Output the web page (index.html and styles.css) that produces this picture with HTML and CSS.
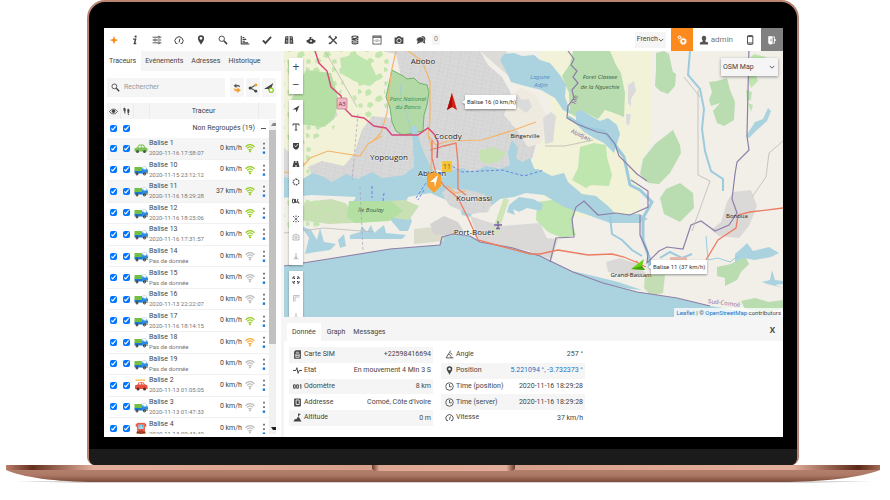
FILE: index.html
```html
<!DOCTYPE html>
<html lang="fr">
<head>
<meta charset="utf-8">
<title>Suivi GPS</title>
<link rel="stylesheet" href="styles.css">
</head>
<body>
<svg class="defs" aria-hidden="true">
  <symbol id="i-plus" viewBox="0 0 16 16"><path d="M8 1l1.800 5.200L15 8 9.800 9.800 8 15 6.200 9.800 1 8l5.200-1.800z" fill="currentColor"/></symbol>
  <symbol id="i-info" viewBox="0 0 16 16"><circle cx="9" cy="2.500" r="1.800" fill="currentColor"/><path d="M5 6.500h4L7 13.500h3" fill="none" stroke="currentColor" stroke-width="2.200"/></symbol>
  <symbol id="i-sliders" viewBox="0 0 16 16"><g fill="none" stroke="currentColor" stroke-width="1.400"><path d="M1 3.500h8m4 0h2M1 8h2m4 0h8M1 12.500h8m4 0h2"/><circle cx="11" cy="3.500" r="1.600"/><circle cx="5" cy="8" r="1.600"/><circle cx="11" cy="12.500" r="1.600"/></g></symbol>
  <symbol id="i-gauge" viewBox="0 0 16 16"><path d="M3 13.500A6.500 6.500 0 1 1 13 13.500H10.500M3 13.500H5.500M8 12l1.500-6" fill="none" stroke="currentColor" stroke-width="1.600"/></symbol>
  <symbol id="i-pin" viewBox="0 0 16 16"><path fill="currentColor" fill-rule="evenodd" d="M8 .5a5 5 0 0 1 5 5c0 3-3 6-5 10-2-4-5-7-5-10a5 5 0 0 1 5-5zm0 2.500a2.300 2.300 0 1 0 0 4.600A2.300 2.300 0 0 0 8 3z"/></symbol>
  <symbol id="i-search" viewBox="0 0 16 16"><circle cx="6" cy="6" r="4.300" fill="none" stroke="currentColor" stroke-width="1.500"/><path d="M9.500 9.500l5 5" stroke="currentColor" stroke-width="2.600"/></symbol>
  <symbol id="i-chart" viewBox="0 0 16 16"><path d="M2 1v13.500h13M4 4h3M4 7h6M4 10h4M4 12.500h9" fill="none" stroke="currentColor" stroke-width="1.700"/></symbol>
  <symbol id="i-check" viewBox="0 0 16 16"><path d="M1.500 8.500l4 4.500L14.500 3" fill="none" stroke="currentColor" stroke-width="3"/></symbol>
  <symbol id="i-road" viewBox="0 0 16 16"><path d="M2 2.500l5-1v12.500H1zM9 1.500l5 1 1 11.500H9z" fill="currentColor"/><path d="M4.500 3v3m0 2v4M11.500 3v3m0 2v4" stroke="#fff"/></symbol>
  <symbol id="i-engine" viewBox="0 0 16 16"><path d="M1 8h2l2-2h1V4H5V3h5v1H8v2h3l2 2h2v4h-2l-2 2H5l-2-2H1z" fill="currentColor"/><circle cx="8" cy="9.500" r="1.500" fill="#fff"/></symbol>
  <symbol id="i-tools" viewBox="0 0 16 16"><path d="M2 2l12 12M14 3L3 14" stroke="currentColor" stroke-width="2.200"/><path d="M1 4l3-3M11.500 2.500L14 5M1.500 12.500l2 2" stroke="currentColor" stroke-width="2"/></symbol>
  <symbol id="i-db" viewBox="0 0 16 16"><g fill="none" stroke="currentColor" stroke-width="1.800"><ellipse cx="8" cy="3.500" rx="5" ry="2"/><path d="M3 6c0 3 10 3 10 0M3 9c0 3 10 3 10 0M3 12c0 3 10 3 10 0M4 8l8-4"/></g></symbol>
  <symbol id="i-code" viewBox="0 0 16 16"><rect x="1.500" y="1.500" width="13" height="13" fill="none" stroke="currentColor" stroke-width="1.300"/><path d="M1.500 3.500h13" stroke="currentColor" stroke-width="2"/><path d="M6 7.500L4.500 9 6 10.500M10 7.500L11.500 9 10 10.500M8.500 7l-1 4" fill="none" stroke="currentColor"/></symbol>
  <symbol id="i-camera" viewBox="0 0 16 16"><path d="M1 4h3.500L6 2h4l1.500 2H15v10H1z" fill="currentColor"/><circle cx="8" cy="9" r="3.400" fill="none" stroke="#fff" stroke-width="1.400"/></symbol>
  <symbol id="i-chat" viewBox="0 0 16 16"><path d="M9 1.500c4 0 6 2 6 5 0 2-.5 2.500-1 3.500l1 4-4-2z" fill="currentColor"/><ellipse cx="7" cy="7.500" rx="6" ry="4.500" fill="currentColor" stroke="#fff" stroke-width=".8"/><path d="M3 10l-1.500 4.500L7 12z" fill="currentColor"/></symbol>
  <symbol id="i-gears" viewBox="0 0 16 16"><g fill="none" stroke="currentColor"><circle cx="10" cy="10" r="3.400" stroke-width="2.400"/><circle cx="10" cy="10" r="5" stroke-width="1.500" stroke-dasharray="2 1.900"/><circle cx="4" cy="3.800" r="1.800" stroke-width="1.600"/><circle cx="4" cy="3.800" r="3" stroke-dasharray="1.300 1.200"/></g></symbol>
  <symbol id="i-user" viewBox="0 0 16 16"><path d="M8 1c2.500 0 3.500 1.800 3.500 4 0 1.800-.8 3-1.500 4v1.500l4.500 1.500V15h-13v-3L6 10.500V9C5.300 8 4.500 6.800 4.500 5 4.500 2.800 5.500 1 8 1z" fill="currentColor"/></symbol>
  <symbol id="i-phone" viewBox="0 0 16 16"><rect x="4" y="1" width="8.500" height="14" rx="1" fill="none" stroke="currentColor" stroke-width="1.500"/><path d="M4 12.800h8.500M4 2.500h8.500" stroke="currentColor" stroke-width="1.500"/></symbol>
  <symbol id="i-exit" viewBox="0 0 16 16"><path d="M2 2h7v12l-3.500 1.500L2 13z" fill="currentColor"/><path d="M9.500 3H12v2.500M12 10.500V13H9.500" fill="none" stroke="currentColor" stroke-width="1.400"/><path d="M11 5l4 3-4 3z" fill="currentColor"/><path d="M6.500 6v4" stroke="#808080" stroke-width="1.400"/></symbol>
  <symbol id="i-down" viewBox="0 0 16 16"><path d="M2 5l6 6 6-6" fill="none" stroke="currentColor" stroke-width="2.300"/></symbol>
  <symbol id="i-refresh" viewBox="0 0 16 16"><path d="M7 1L2.500 4.500 7 8V5.700h3c1.500 0 2 .8 2 1.800C13.500 5 12 3.300 10 3.300H7z" fill="#555"/><path d="M9 8l4.500 3.500L9 15v-2.300H6.500C4.500 12.700 3 11 4 8.500c0 1.200 1 1.800 2.500 1.800H9z" fill="#f79a2b" stroke="#f79a2b" stroke-width=".8"/></symbol>
  <symbol id="i-share" viewBox="0 0 16 16"><path d="M12.500 3L4 8l8.500 5" fill="none" stroke="#555" stroke-width="1.800"/><circle cx="12.500" cy="3" r="2.300" fill="#f79a2b"/><circle cx="3.500" cy="8" r="2.500" fill="#444"/><circle cx="12.500" cy="13" r="2.300" fill="#444"/></symbol>
  <symbol id="i-addobj" viewBox="0 0 16 16"><path d="M15 0L0 9.500h7L9 15z" fill="#4a4a4a"/><circle cx="11.500" cy="11.500" r="3.300" fill="#fff" stroke="#8fd01f" stroke-width="2"/></symbol>
  <symbol id="i-eye" viewBox="0 0 16 16"><path d="M1 8c3.500-5.500 10.500-5.500 14 0-3.500 5.500-10.500 5.500-14 0z" fill="none" stroke="currentColor" stroke-width="1.500"/><circle cx="8" cy="7.500" r="3" fill="currentColor"/></symbol>
  <symbol id="i-feet" viewBox="0 0 16 16"><path d="M3 1.500c3-1 4.500 2 3 7H3.500c0-2-2-5-.5-7zM3.800 9.500h2.500c0 3-2.300 3-2.500 0zM10 3.500c3-1 4 2 2.500 7H10c0-2-1.500-5 0-7zM10 11.500h2.500c0 3.500-2.300 3.500-2.500 0z" fill="currentColor"/></symbol>
  <symbol id="i-wifi" viewBox="0 0 16 16"><g fill="none" stroke="currentColor"><path d="M1 6c4-4.500 10-4.500 14 0" stroke-width="2"/><path d="M3.300 8.700c3-3.300 6.400-3.300 9.400 0" stroke-width="2"/><path d="M5.500 11.300c1.600-1.700 3.400-1.700 5 0" stroke-width="1.800"/></g><circle cx="8" cy="13.300" r="1.700" fill="currentColor"/></symbol>
  <symbol id="i-dots" viewBox="0 0 4 16"><path d="M1 2h2v2H1zM1 7h2v2H1z" fill="#666"/><path d="M.6 12h2.700v2.700H.6z" fill="#1478d4"/></symbol>
  <symbol id="v-truck" viewBox="0 0 28 24"><path d="M17 4h7l3 7v4H17z" fill="#d5e6f0"/><path d="M1 13h26v6H1z" fill="#1d78cf"/><path d="M16 9h10l2 4v6H16z" fill="#2c8be0"/><path d="M19 6h4l2 5h-6z" fill="#f2fafd"/><path d="M1 6h15v8H1z" fill="#72c043"/><circle cx="6" cy="20" r="2.800" fill="#333"/><circle cx="21" cy="20" r="2.800" fill="#333"/><circle cx="6" cy="20" r="1.200" fill="#ccc"/><circle cx="21" cy="20" r="1.200" fill="#ccc"/><path d="M25 16h3v3h-3z" fill="#f6a623"/></symbol>
  <symbol id="v-car" viewBox="0 0 28 24"><path d="M1 19v-6l5-2 4-6h9l4 6 4 2v6z" fill="#7bc253"/><path d="M8 11l3-4h3v4zM15.500 7H18l3 4h-5.500z" fill="#e8f6e0"/><circle cx="7" cy="19" r="3" fill="#4a5a45"/><circle cx="21" cy="19" r="3" fill="#4a5a45"/></symbol>
  <symbol id="v-red" viewBox="0 0 28 24"><path d="M3 1h19v2.500H3z" fill="#f6b93b"/><path d="M2 20v-7l5-2 3-5h8l4 5 5 2v7z" fill="#e8513f"/><path d="M9 11l2-4h3v4zM15.500 7H17l3 4h-4.500z" fill="#ffe5dd"/><circle cx="8" cy="20" r="3" fill="#5a2a26"/><circle cx="21" cy="20" r="3" fill="#5a2a26"/></symbol>
  <symbol id="v-bus" viewBox="0 0 28 32"><path d="M5 2h18v22H5z" fill="#ea5b47"/><path d="M8 6h12v10H8z" fill="#9adcf0"/><path d="M11 7l2 0-2 6zM17 7l2 0-2 6z" fill="#2e80a5"/><path d="M2 4h3v7H2zM23 4h3v7h-3z" fill="#ea5b47"/><path d="M4 22h20v5H4z" fill="#7b2d26"/><path d="M4 26h6v5H4zM18 26h6v5h-6z" fill="#f8c12c"/><path d="M10 19h8v7h-8z" fill="#b93a2c"/></symbol>
  <symbol id="i-arrow" viewBox="0 0 16 16"><path d="M15 1L1 9h6.500L9 15z" fill="currentColor"/></symbol>
  <symbol id="i-text" viewBox="0 0 16 16"><path d="M2 5V2h12v3M8 2v12M5.500 14h5" fill="none" stroke="currentColor" stroke-width="2"/></symbol>
  <symbol id="i-shield" viewBox="0 0 16 16"><path d="M2 2h12v7c0 3-3 5-6 6.500C5 14 2 12 2 9z" fill="currentColor"/><path d="M5 7l2.500 2.500L12 4" fill="none" stroke="#fff" stroke-width="1.600"/></symbol>
  <symbol id="i-highway" viewBox="0 0 16 16"><path d="M4 2h3v4h2V2h3l3 12H9v-4H7v4H1z" fill="currentColor"/></symbol>
  <symbol id="i-poly" viewBox="0 0 16 16"><path d="M8 2l5.500 3v6L8 14l-5.500-3V5z" fill="none" stroke="currentColor" stroke-width="2.200" stroke-dasharray="3.500 1.600"/></symbol>
  <symbol id="i-ruler" viewBox="0 0 16 16"><path d="M1 4.500v7h4v-7zM7 4v8M9 12l3-8M12 12h3M12 8v4" fill="none" stroke="currentColor" stroke-width="1.900"/></symbol>
  <symbol id="i-cluster" viewBox="0 0 16 16"><circle cx="8" cy="8" r="2" fill="currentColor"/><path d="M2 2l3 3M14 2l-3 3M2 14l3-3M14 14l-3-3M8 1v3M8 12v3" stroke="currentColor" stroke-width="1.800"/></symbol>
  <symbol id="i-street" viewBox="0 0 16 16"><path d="M2 5l6-3 6 3v9H2z" fill="none" stroke="currentColor" stroke-width="1.400"/><circle cx="8" cy="8.500" r="2.500" fill="none" stroke="currentColor" stroke-width="1.400"/></symbol>
  <symbol id="i-anchor" viewBox="0 0 16 16"><path d="M8 2v11M3 13.500h10M5.500 9.500L8 12l2.500-2.500" fill="none" stroke="currentColor" stroke-width="1.400"/></symbol>
  <symbol id="i-full" viewBox="0 0 16 16"><path d="M2 6V2h4M10 2h4v4M14 10v4h-4M6 14H2v-4M3 3l3 3M13 3l-3 3M3 13l3-3M13 13l-3-3" fill="none" stroke="currentColor" stroke-width="2"/></symbol>
  <symbol id="i-corner" viewBox="0 0 16 16"><path d="M3 15V3h12M6 15V6h9" fill="none" stroke="currentColor" stroke-width="1.200"/></symbol>
  <symbol id="i-sim" viewBox="0 0 16 16"><path d="M2 3l2.500-2.500H14v15H2z" fill="currentColor"/><path d="M5 4h6M5 7h6v6H5zM5 10h6" fill="none" stroke="#fff" stroke-width="1.300"/></symbol>
  <symbol id="i-pulse" viewBox="0 0 16 16"><path d="M0 8h5l2-5 2 10 2-5h5" fill="none" stroke="currentColor" stroke-width="1.700"/></symbol>
  <symbol id="i-odo" viewBox="0 0 16 16"><path d="M1 5h3v6H1zM6.500 5h3v6h-3zM12 6l2-1.500V12" fill="none" stroke="currentColor" stroke-width="1.700"/></symbol>
  <symbol id="i-book" viewBox="0 0 16 16"><rect x="2" y="1" width="12" height="14" rx="1.500" fill="currentColor"/><path d="M5.500 3.500h5.500v8H5.500z" fill="none" stroke="#fff" stroke-width="1.500"/></symbol>
  <symbol id="i-alt" viewBox="0 0 16 16"><path d="M1 15l2-4 4-1 1-3 3 1 4 7zM9 1h2v5H9z" fill="currentColor"/><path d="M11 1l3 1.500L11 4z" fill="currentColor"/></symbol>
  <symbol id="i-angle" viewBox="0 0 16 16"><path d="M10 1L2 14h13M6 8c3 0 5 2 5 6M9 5l4 3" fill="none" stroke="currentColor" stroke-width="1.500"/></symbol>
  <symbol id="i-clock" viewBox="0 0 16 16"><circle cx="8" cy="8" r="6.700" fill="none" stroke="currentColor" stroke-width="1.500"/><path d="M8 3.500V8.500H12" fill="none" stroke="currentColor" stroke-width="1.500"/></symbol>
</svg>

<div class="device">
  <div class="lid">
    <main class="screen">
      <header class="topbar">
        <nav class="tools" aria-label="Outils">
          <button class="tool tool-first" aria-label="Ajouter"><svg><use href="#i-plus"/></svg></button>
          <button class="tool" aria-label="Info"><svg><use href="#i-info"/></svg></button>
          <button class="tool" aria-label="Réglages"><svg><use href="#i-sliders"/></svg></button>
          <button class="tool" aria-label="Tableau de bord"><svg><use href="#i-gauge"/></svg></button>
          <button class="tool" aria-label="Point"><svg><use href="#i-pin"/></svg></button>
          <button class="tool" aria-label="Recherche"><svg><use href="#i-search"/></svg></button>
          <button class="tool" aria-label="Rapports"><svg><use href="#i-chart"/></svg></button>
          <button class="tool" aria-label="Tâches"><svg><use href="#i-check"/></svg></button>
          <button class="tool" aria-label="Carnet"><svg><use href="#i-road"/></svg></button>
          <button class="tool" aria-label="Moteur"><svg><use href="#i-engine"/></svg></button>
          <button class="tool" aria-label="Maintenance"><svg><use href="#i-tools"/></svg></button>
          <button class="tool" aria-label="Dépenses"><svg><use href="#i-db"/></svg></button>
          <button class="tool" aria-label="Commandes"><svg><use href="#i-code"/></svg></button>
          <button class="tool" aria-label="Caméra"><svg><use href="#i-camera"/></svg></button>
          <button class="tool" aria-label="Discussion"><svg><use href="#i-chat"/></svg></button>
          <span class="count">0</span>
        </nav>
        <div class="account">
          <div class="pick pick-lang"><select aria-label="Langue"><option>French</option></select><svg><use href="#i-down"/></svg></div>
          <button class="block block-orange" aria-label="Configuration"><svg><use href="#i-gears"/></svg></button>
          <a class="user" href="#"><svg><use href="#i-user"/></svg>admin</a>
          <button class="tool" aria-label="Mobile"><svg><use href="#i-phone"/></svg></button>
          <button class="block block-grey" aria-label="Déconnexion"><svg><use href="#i-exit"/></svg></button>
        </div>
      </header>

      <div class="work">
        <aside class="side">
          <nav class="tabs">
            <button class="tab tab-on">Traceurs</button><button class="tab">Evénements</button><button class="tab">Adresses</button><button class="tab">Historique</button>
          </nav>
          <div class="finder">
            <label class="search"><svg><use href="#i-search"/></svg><input type="text" placeholder="Rechercher" aria-label="Rechercher"></label>
            <button class="mini" aria-label="Actualiser"><svg><use href="#i-refresh"/></svg></button>
            <button class="mini" aria-label="Partager"><svg><use href="#i-share"/></svg></button>
            <button class="mini" aria-label="Ajouter un traceur"><svg><use href="#i-addobj"/></svg></button>
          </div>
          <div class="list">
            <table class="trackers">
              <colgroup><col class="c-check"><col class="c-check"><col class="c-icon"><col><col class="c-speed"><col class="c-wifi"><col class="c-menu"></colgroup>
              <thead>
                <tr><th><svg><use href="#i-eye"/></svg></th><th><svg><use href="#i-feet"/></svg></th><th></th><th colspan="3">Traceur</th><th></th></tr>
              </thead>
              <tbody id="rows">
                <tr class="group"><td><input type="checkbox" checked aria-label="Afficher le groupe"></td><td><input type="checkbox" checked aria-label="Suivre le groupe"></td><td colspan="4">Non Regroupés (19)</td><td class="menu"><span class="minus"></span></td></tr>
              </tbody>
            </table>
            <div class="scroll" aria-hidden="true"><span class="up"></span><span class="thumb"></span><span class="down"></span></div>
          </div>
        </aside>

        <section class="content">
          <div class="map">
            <svg class="canvas" viewBox="284 51 499 266" preserveAspectRatio="xMidYMid slice">
              <defs>
                <pattern id="streets" width="9" height="8" patternUnits="userSpaceOnUse" patternTransform="rotate(12)"><path d="M0 2h9M3 0v8M0 6h5M7 2v6" fill="none" stroke="#cbcaca" stroke-width=".4"/></pattern>
                <pattern id="scrub" width="26" height="22" patternUnits="userSpaceOnUse"><path d="M1 3l4-2 3 3-2 3-4 1zM12 9l5-2 2 4-4 3-4-1zM20 1l3 1 1 3-4 1zM4 15l3-1 3 3-4 3-3-2zM20 16l4-1 1 4-4 1z" fill="#c3e5ae"/></pattern>
              </defs>
              <path d="M284 51h499v266H284z" fill="#f2efe9"/>
              <!-- farmland -->
              <path d="M284 51h106l-5 30-5 45 5 30-60 25h-41zM540 51h111v90l-14 30 5 50-70-5-40-25-3-20 10-25 15-30-10-30z" fill="#f1f2d8"/>
              <path d="M284 51h100l-10 20-30 8-10 50-20 10-5 35-25 4z" fill="url(#scrub)"/>
              <path d="M350 51h45l-4 22-6 17 3 20-20 8-12-14-6-13 8-18z" fill="url(#scrub)"/>
              <!-- built-up areas -->
              <path d="M382 51h98l8 14 14 12 10 18 20 22 6 20-6 22-22 8-30 6-46-3-12 10-46 2-42 6-20-9-6-12 14-6 22 5 10-12 8-24 10-14 18 2 10 6 2-22-2-30-4-18z" fill="#dad9d9"/>
              <path d="M284 148l14 10 6 24-20 2zM320 105l12-2 6 12-10 8-10-6z" fill="#dad9d9"/>
              <path d="M480 51h26l8 14 10 4 2 14-14-4-16-14z" fill="#dcdbd8"/>
              <path d="M382 51h98l8 14 14 12 10 18 20 22 6 20-6 22-22 8-30 6-46-3-12 10-46 2-42 6-20-9-6-12 14-6 22 5 10-12 8-24 10-14 18 2 10 6 2-22-2-30-4-18z" fill="url(#streets)"/>
              <path d="M510 95l12-8 14 8 10 20-4 28-14 4-12-18-12-14z" fill="#efeadf"/>
              <path d="M512 96l6-2 3 6 8-1 3 8-6 6-8-6-6-3zM543 118l8-6 5 4-3 26-8 2zM628 85l6-4 2 10-5 8 0 8-3-4zM626 114l5 0-2 12-3-3z" fill="#dcdbdb"/>
              <!-- woodland -->
              <g fill="#b9dcb0">
                <path d="M573 51h37l6 14 5 8 4 20-1 24-10-4-9-3-7 9-14-7-8 5-6-4-1-20-7-17 8-12z"/>
                <path d="M656 53l8-2 5 3 2 10 2 8 3 2-1 12-7 8-8-3-5-5 1-16z"/>
                <path d="M709 82l8-1 10-3 3 12 5 12-1 18-10 6-7-3-4-12 7-8-9 3-2-6 3-8z"/>
                <path d="M673 130l7 15 1 8-11 20-11 11-11-1-8-9 3-15 12-15z"/>
                <path d="M680 183l13 10 1 15-14 14-16-8-4-16 6-9z"/>
                <path d="M717 267l14-3 14-8 4 8-8 8-4 8-12 6 0-8-8-2zM741 301l14-3 14 4 14-2v9l-20 4-18-4z"/>
                <path d="M645 275h20l-2 18-12 3-7-8z" fill="#c5ddb4"/>
              </g>
              <g fill="#bfe6ae">
                <path d="M580 147l14-4 12 2 1 12 5 18-3 11-18-1-5 3-14-8 6-12z"/>
                <path d="M537 202l22-3 18 6-5 18 4 12-14 3-14-6-12-12z"/>
                <path d="M306 70l25 3 8 28-5 18-10 8-26-3-8-22z" fill="#b5dfa4"/>
                <path d="M287 60h8l4 7-10 3zM340 58l16-4 14 8 8 18-10 6-14-5-12-7z"/>
                <path d="M748 60l6-6 12 3-3 10-8 6 3 8-7 7-3-8zM746 90l6 2-1 8-4 1zM748 103l5 2-2 7z"/>
                <path d="M480 150l14-3 12 6-8 9-12 2-6-4z" fill="#c6e2b2"/>
              </g>
              <path d="M392 70l11 6 4 3 7-1 5 5 8 2 2 7-2 13-3 10-1 16-9 2-12 2-6-4-4-9-2-14-4-11z" fill="#b2d9a6" stroke="#6fb56a"/>
              <path d="M400 84l2 20 6 14 3 15" fill="none" stroke="#a3cfcf"/>
              <!-- sea -->
              <path d="M284 266l19-3 44-7 43-7 50-4 2-8 11-3 17 2 10 6 33 6 27 8 33 16 30 11 34 9 40 6 33 8 73 11v3H284z" fill="#aad3df"/>
              <!-- lagoons -->
              <g fill="#aad3df">
                <path d="M284 177l16 4 12-8 10 3 10 6 14-8 12 5 14-7 10 6 22-3 10-8-1-24-2-16 5-2 3 14 5 14 5 10 7 12 12-4 14-3 12 4 12-6 14 3 10-4 12 6 16-2 14 7 12-3 4 9 14 12 14 2 12 10 8 8 24 0 8 5-8 4-30 0-22-8-24-8-20-12-18-2-12 4-14 2-10 8-14 2-6 8-8-2-4-12-14-4-14-6-22 4-4 10 8 14-4 10-8 0-12-14-6-4-16 0-18 8-14-2 16-12 6-10-44-2-30 3-12-6-14 2-18 6z"/>
                <path d="M500 60l4-6 10-1 8 3 12-1 6 5 10 3 10 12 6 10-1 12 6 17-8-4-8-12-14-8-16-4-14-4-4-9z"/>
                <path d="M512 140l6 8-2 10 6 4 8-4 4 10 10 10-8 6-30 2-4-12 8-8-2-14z"/>
                <path d="M576 112l5-2 10 6 9 5 8-3 9 7 3 9-3 10-3 9-10-10-10-5-10-6-8-8z"/>
                <path d="M746 136l9-14 8-3 5-11 3 3-4 10-10 9-8 8z"/>
                <path d="M305 254l4-16-8-12 10 4 6 10 3-12 4 14 12 2-6 6-14 2zM338 240l6-6 2 12-6 2zM350 235l10-3 2-6 5 6 4-7 3 8 10-8 2 8 20 2-4 4-30 0-22 0z"/>
                <path d="M509 205l10-8 14 2 10 5-2 7-14-3-8 4-6-3 2 6-8-3z"/>
                <path d="M530 165l6 10 10 6 14 2-4 8-16-3-12-10z"/>
                <path d="M735 254l8-7 4-4 6 8 16-4 10 6-8 4-16 3-12-2-8 4zM762 282l8-2 2-10 3 10 8 1v3l-8 1 8 3-16-4z"/>
                <path d="M568 270l30 7 20 5 24 8-12-1-30-6-28-9z"/>
              </g>
              <path d="M305 202l26-3 14 4 6 6 14-7 40-2 14 6-10 14-16-2-20 4-44 2-30-4z" fill="#c9dfb4"/>
              <path d="M284 200l20-1 30 4-2 22-48 4z" fill="url(#scrub)"/>
              <path d="M349 201l42 0 12 10-14 10-34 2-8-6z" fill="#b3dfa2"/>
              <path d="M414 229l28-3 2 15-30 3z" fill="#dbdccb"/>
              <path d="M430 224l14-8 14 6 6 10-14 4-16-2z" fill="#d4d3d2"/>
              <path d="M446 188l22 2 16 4 8 10-4 8-18 2-20-8-8-12z" fill="#dad9d9"/>
              <path d="M446 188l22 2 16 4 8 10-4 8-18 2-20-8-8-12z" fill="url(#streets)"/>
              <path d="M470 216l18 6 14 4 38-3 10 22-8 8-46-8-18-6z" fill="#dad9d8"/>
              <path d="M492 232l12-35 5 3-12 36z" fill="#cfe5b8"/>
              <path d="M530 237l28 2-6 20-22-6zM606 262l14-4 18 6 8 10-18 2-20-4zM733 192l18-2 6 16-8 20-10 12-20-2-8-6 10-8 6-20z" fill="#dad9d8"/>
              <!-- rivers -->
              <g fill="none" stroke="#9ccbdd">
                <path d="M568 117l18 11 18 3 8 10 12 16 6 28 10 5 12 12-9 16 0 22 7 20-1 8" stroke-width="3"/>
                <path d="M690 51l-2 24 12 14 4 20-2 20 3 22 6 20 12 8 0 12" stroke-width="2"/>
                <path d="M610 216l2 18 10 6 10 10 10 6M660 258l10-6 12 6 10-4" stroke-width="2"/>
                <path d="M706 236l2 24 10-2 12 4 8-6"/>
              </g>
              <!-- administrative boundaries -->
              <g fill="none" stroke="#8d7fa8" stroke-width="1.200">
                <path d="M284 266l19-3 44-7 43-7 50-4 2-8 11-3 17 2 10 6 33 6 27 8 33 16 30 11 34 9 40 6 33 8"/>
                <path d="M568 51l6 8-3 6 6 6-4 6 5 6-6 7 2 8-6 8-1 12 10 6 20 8 10 2 8 10 4 12 18 18 10 7"/>
                <path d="M550 262l6-24 18-1-2-18 4-12 8-6 14 14 18-2 14 2 18-8 0-16-17-11M640 215l0 20 8 18-1 10 12-12 8-4 16 2 8-24 10-4 14 10 14-6 8-12-5-14 3-25 2-12 12-12-2-14 2-90"/>
                <path d="M358 114l-6 66M360 187l3 65" stroke="#a7a2bd" stroke-width=".7" stroke-dasharray="3 2"/>
              </g>
              <path d="M416 198l12-18 24-14 10 6 40-2 22 6 20-6M372 186v12M384 193l-1 8M424 190l-6 10" fill="none" stroke="#5a7de0" stroke-width=".9" stroke-dasharray="3 2"/>
              <!-- secondary roads -->
              <g fill="none" stroke="#bcb9b5" stroke-width=".8">
                <path d="M325 51l32 56M698 90l0 85 12 6-18 50M783 141l-14 12-3 24-14 20M545 146l20 0 28-6M684 77l16 20M284 233l40-5 50 4"/>
              </g>
              <g fill="none" stroke="#f4b56a" stroke-width="1.200">
                <path d="M396 51l-5 22-4 40-6 20-10 10M408 51l14 10 8 20 0 40-2 14 8 10 12-4 34-1 32-10 22-8M284 172l12 2 14-16 18-7 32 5 8-12 14-8M428 135l4 14-1 20 6 14M447 185l8 8 10-2"/>
              </g>
              <g fill="none" stroke="#eb7d62" stroke-width="1.300">
                <path d="M432 140l0 18 4 16 8 12 14 12 10 20 10 22 22 6 30 8h10l18-4 30 5 24-1 12 3 14 6 8 4M430 150l14-4 12-3 2 20 0 26 8 6M636 261l6 6M706 260l12-20 18-12 2-13 12-3 33-4"/>
              </g>
              <path d="M315 51l4 12 8 8 4 16 10 9 3 12 8 8 12 2 10 8 12 2 6 7 12 0 14 0 10-7 6 6 4 8-1 16" fill="none" stroke="#d9467a" stroke-width="1.400"/>
              <rect x="670" y="257" width="17" height="6" rx="1" fill="#e4b8ac"/>
              <rect x="337" y="98" width="10" height="11" rx="1" fill="#efb9c6" stroke="#c77391" stroke-width=".7"/>
              <path d="M498 221v8M494 225h8M496 228.500h4" stroke="#8060ad" stroke-width="1.400"/>

              <!-- place names -->
              <g class="city">
                <text x="423" y="64">Abobo</text><text x="389" y="160">Yopougon</text><text x="448" y="139">Cocody</text>
                <text x="432" y="176">Abidjan</text><text x="474" y="201">Koumassi</text><text x="474" y="235">Port-Bouët</text>
              </g>
              <g class="town">
                <text x="525" y="138">Bingerville</text><text x="737" y="218">Bonoua</text><text x="631" y="277">Grand-Bassam</text>
                <text x="342" y="106" class="a3">A3</text>
              </g>
              <g class="wood">
                <text x="408" y="101" class="park">Parc National</text><text x="408" y="109" class="park">du Banco</text>
                <text x="600" y="79" class="forest">Foret Classee</text><text x="600" y="89" class="forest">de la Nguechie</text>
                <text x="371" y="212">Île Boulay</text>
              </g>
              <g class="water"><text x="540" y="79">Lagune</text><text x="541" y="87">Adjin</text></g>
              <g class="admin"><text transform="translate(580 137) rotate(25)">Abidjan</text><text transform="translate(577 100) rotate(-78)">Mé</text><text transform="translate(724 305) rotate(7)">Sud-Comoé</text></g>

              <!-- trackers on the map -->
              <path d="M452 93l5 17-5-3-5 3z" fill="#d61f14"/><path d="M452 93l0 14-5 3z" fill="#a80f08"/>
              <rect x="442" y="161" width="10" height="11" rx="1" fill="#f3c53c"/><text x="447" y="169" class="cluster">11</text>
              <path d="M427 175l7-3 7 3v11l-7 7-7-7z" fill="#f9a12e"/><path d="M438 175l-8 7 4 0 1 5z" fill="#fff"/>
              <path d="M631 269l13-10-2 7 3 4z" fill="#63d511"/><path d="M631 269l11-3 3 4z" fill="#43a30a"/>
              <g class="tip">
                <path d="M465 95h51v14h-51v-5l-3-2 3-2z"/><text x="467" y="104">Balise 16 (0 km/h)</text>
                <path d="M651 260h56v14h-56v-5l-3-2 3-2z"/><text x="653" y="269">Balise 11 (37 km/h)</text>
              </g>
            </svg>

            <div class="controls">
              <div class="stack"><button class="sign">+</button><button class="sign">−</button></div>
              <div class="stack stack-tools">
                <button aria-label="Flèches"><svg><use href="#i-arrow"/></svg></button>
                <button aria-label="Libellés"><svg><use href="#i-text"/></svg></button>
                <button aria-label="Marqueurs"><svg><use href="#i-shield"/></svg></button>
                <button aria-label="Routes"><svg><use href="#i-highway"/></svg></button>
                <button aria-label="Zones"><svg><use href="#i-poly"/></svg></button>
                <button aria-label="KML"><svg><use href="#i-ruler"/></svg></button>
                <button aria-label="Groupes"><svg><use href="#i-cluster"/></svg></button>
                <button class="pale" aria-label="Vue de rue"><svg><use href="#i-street"/></svg></button>
                <button class="pale" aria-label="Ancrage"><svg><use href="#i-anchor"/></svg></button>
              </div>
              <div class="stack">
                <button aria-label="Plein écran"><svg><use href="#i-full"/></svg></button>
                <button class="pale" aria-label="Cadre"><svg><use href="#i-corner"/></svg></button>
                <button class="pale" aria-label="Mesure"><svg><use href="#i-anchor"/></svg></button>
              </div>
            </div>
            <div class="pick pick-map"><select aria-label="Fond de carte"><option>OSM Map</option></select><svg><use href="#i-down"/></svg></div>
            <div class="credit"><a href="#">Leaflet</a> | © <a href="#">OpenStreetMap</a> contributors</div>
          </div>

          <div class="detail">
            <nav class="tabs tabs-detail">
              <button class="tab tab-on">Donnée</button><button class="tab">Graph</button><button class="tab">Messages</button>
              <button class="close" aria-label="Fermer">X</button>
            </nav>
            <div class="facts">
              <table class="fact">
                <tr><th><svg><use href="#i-sim"/></svg>Carte SIM</th><td>+22598416694</td></tr>
                <tr><th><svg><use href="#i-pulse"/></svg>Etat</th><td>En mouvement 4 Min 3 S</td></tr>
                <tr><th><svg><use href="#i-odo"/></svg>Odomètre</th><td>8 km</td></tr>
                <tr><th><svg><use href="#i-book"/></svg>Addresse</th><td>Comoé, Côte d'Ivoire</td></tr>
                <tr><th><svg><use href="#i-alt"/></svg>Altitude</th><td>0 m</td></tr>
              </table>
              <table class="fact fact-even">
                <tr><th><svg><use href="#i-angle"/></svg>Angle</th><td>257 °</td></tr>
                <tr><th><svg><use href="#i-pin"/></svg>Position</th><td><a href="#">5.221094 °, -3.732373 °</a></td></tr>
                <tr><th><svg><use href="#i-clock"/></svg>Time (position)</th><td>2020-11-16 18:29:28</td></tr>
                <tr><th><svg><use href="#i-clock"/></svg>Time (server)</th><td>2020-11-16 18:29:28</td></tr>
                <tr><th><svg><use href="#i-gauge"/></svg>Vitesse</th><td>37 km/h</td></tr>
              </table>
            </div>
          </div>
        </section>
      </div>
    </main>
    <div class="chin"></div>
  </div>
  <svg class="base" viewBox="0 0 874 20" preserveAspectRatio="none" aria-hidden="true">
    <defs>
      <linearGradient id="metal" x2="0" y2="1"><stop offset="0" stop-color="#b78570"/><stop offset=".6" stop-color="#ad7966"/><stop offset="1" stop-color="#7c4a39"/></linearGradient>
      <linearGradient id="edge"><stop offset="0" stop-color="#b87f6a"/><stop offset=".03" stop-color="#652f1d"/><stop offset=".1" stop-color="#e3ae9b"/><stop offset=".4" stop-color="#d8a18d"/><stop offset=".6" stop-color="#d8a18d"/><stop offset=".9" stop-color="#e3ae9b"/><stop offset=".975" stop-color="#5c2716"/><stop offset="1" stop-color="#a06a56"/></linearGradient>
      <linearGradient id="notch"><stop offset="0" stop-color="#6b3c2c"/><stop offset=".05" stop-color="#dea793"/><stop offset=".94" stop-color="#e3ae9b"/><stop offset="1" stop-color="#6b3c2c"/></linearGradient>
    </defs>
    <path d="M8 16h858l-60 2H70z" fill="#d8d8d8"/>
    <path d="M0 0h874v5c-20 8-60 12-98 12H90C50 17 15 12 0 5z" fill="url(#metal)"/>
    <path d="M0 0h874v5H0z" fill="url(#edge)"/>
    <path d="M366 0h143v4l-3 2H369l-3-2z" fill="url(#notch)"/>
  </svg>
</div>
<script src="app.js"></script>
</body>
</html>
```
FILE: styles.css
```css
* { box-sizing: border-box; }
body { margin: 0; background: #fff; color: #444; font: 7px/9px Roboto, "Open Sans", sans-serif; }
button, input, select { margin: 0; padding: 0; border: 0; background: none; color: inherit; font: inherit; }
button { display: flex; align-items: center; justify-content: center; }
a { color: inherit; text-decoration: none; }
svg { display: block; flex: none; width: 10px; height: 10px; }
table { border-collapse: collapse; table-layout: fixed; }
th, td { padding: 0; font-weight: 400; }
.defs { position: absolute; width: 0; height: 0; }

.device { padding: 0 10px 0 6px; }
.lid { margin: 0 81px; padding: 26px 14px 0 15px; border: 2px solid #b98472; border-bottom: 0; border-radius: 18px 18px 8px 8px; background: #000; overflow: hidden; }
.chin { height: 16px; margin: 12px -14px 0 -15px; background: #1b1b1b; }
.base { width: 100%; height: 20px; }
.screen { background: #fff; }

.topbar { display: flex; justify-content: space-between; height: 23px; }
.tools, .account { display: flex; align-items: center; }
.tool { width: 22px; height: 22px; }
.tool-first { width: 20px; color: #f98c1f; }
.count { padding: 1px 2px; background: #f5f5f5; color: #888; }
.pick { position: relative; display: flex; align-items: center; background: #f5f5f5; }
.pick select { width: 100%; height: 100%; padding-left: 2px; appearance: none; outline: 0; }
.pick svg { position: absolute; right: 2px; width: 6px; height: 6px; pointer-events: none; }
.pick-lang { width: 31px; height: 16px; margin-right: 5px; }
.block { width: 22px; height: 23px; color: #fff; }
.block-orange { background: #fc8a1d; }
.block-grey { background: #808080; }
.user { display: flex; align-items: center; gap: 2px; margin: 0 6px; color: #777; font-size: 8px; }
.user svg { color: #555; }

.work { display: flex; }
.side { width: 180px; flex: none; border-right: 3px solid #f5f5f5; }
.content { flex: 1; min-width: 0; display: flex; flex-direction: column; }
.tabs { display: flex; height: 20px; background: #f5f5f5; }
.tab { padding: 5px 5px 0; align-items: flex-start; height: 100%; }
.tab { padding: 0 4px; align-items: center; }
.tab-on { padding: 0 5px; background: #fff; }

.finder { display: flex; gap: 2px; margin: 7px 5px 6px 3px; }
.search { flex: 1; display: flex; align-items: center; gap: 4px; height: 19px; margin-right: 3px; padding-left: 4px; background: #f5f5f5; }
.search svg { width: 9px; height: 9px; }
.search input { width: 80px; outline: 0; }
.search input::placeholder { color: #999; }
.mini { width: 14px; height: 19px; background: #f5f5f5; }

.list { position: relative; height: 331px; margin: 0 5px 0 3px; overflow: hidden; }
.trackers { width: 100%; height: 337px; }
.c-check { width: 13px; }
.c-icon { width: 16px; }
.c-speed { width: 30px; }
.c-wifi { width: 16px; }
.c-menu { width: 18px; }
.trackers th { height: 16px; border-right: 1px solid #ececec; background: #f5f5f5; }
.trackers th svg { width: 9px; height: 9px; margin: auto; }
.trackers th:last-child { border: 0; }
.trackers input { display: block; width: 7px; height: 7px; margin: 0 auto; accent-color: #0075ff; }
.group td { height: 19px; padding-right: 3px; text-align: right; }
.group td:first-child, .group td:nth-child(2), .group .menu { padding: 0; }
.minus { display: block; width: 5px; height: 1px; margin-left: 3px; background: #555; }
.row { border-bottom: 1px solid #f1f1f1; }
.row-on { background: #f5f5f5; }
.row svg { width: 14px; height: 14px; margin: auto; }
.name { line-height: 9px; white-space: nowrap; }
.name span { display: block; }
.name small { display: block; color: #777; font-size: 6px; }
.speed { text-align: right; white-space: nowrap; }
.row .wifi svg { width: 10px; height: 10px; }
.row .menu svg { width: 4px; height: 14px; margin: 0 0 0 4px; }
.green { color: #94cc1c; }
.amber { color: #f8a933; }
.none { color: #bbb; }
.scroll { position: absolute; top: 17px; right: 0; bottom: 0; display: flex; flex-direction: column; width: 7px; background: #f1f1f1; }
.thumb { height: 214px; background: #c1c1c1; }
.up, .down { height: 10px; }
.up::before, .down::before { content: ""; display: block; width: 4px; margin: 3px 2px; border: 2px solid transparent; border-top: 0; border-bottom: 3px solid #888; }
.down { margin-top: auto; }
.down::before { border-top: 3px solid #222; border-bottom: 0; }

.map { position: relative; height: 266px; overflow: hidden; background: #aad3df; }
.canvas { width: 100%; height: 100%; }
.canvas text { font-family: "Open Sans", "Noto Sans", sans-serif; text-anchor: middle; }
.city text { font-size: 8px; fill: #222; stroke: #fff; stroke-width: 1px; stroke-opacity: .5; paint-order: stroke; }
.town text { font-size: 6px; fill: #222; }
.town .a3 { fill: #7d1f45; }
.wood text { font-size: 6px; font-style: italic; fill: #3f5c40; }
.wood .park { fill: #3e8b46; }
.wood .forest { font-size: 6px; }
.water text { font-size: 6px; font-style: italic; fill: #5788c0; }
.admin text { font-size: 6px; fill: #8b5f99; }
.canvas .cluster { font-size: 7px; fill: #8a5a10; }
.tip path { fill: #fff; filter: drop-shadow(0 1px 1px rgba(0, 0, 0, .4)); }
.canvas .tip text { font: 6px Roboto, "Open Sans", sans-serif; fill: #333; text-anchor: start; }

.controls { position: absolute; top: 7px; left: 5px; display: flex; flex-direction: column; gap: 6px; }
.stack { display: flex; flex-direction: column; width: 14px; background: #fff; box-shadow: 0 1px 2px rgba(0, 0, 0, .35); }
.stack button { height: 18px; }
.stack svg { width: 8px; height: 8px; }
.stack .pale { color: #999; }
.stack .sign { font: 12px/18px "Open Sans", sans-serif; }
.stack-tools { height: 165px; justify-content: space-around; }
.pick-map { position: absolute; top: 7px; right: 5px; width: 57px; height: 18px; box-shadow: 0 1px 3px rgba(0, 0, 0, .4); }
.pick-map svg { right: 3px; }
.credit { position: absolute; right: 0; bottom: 0; padding: 0 2px; background: rgba(255, 255, 255, .75); font-size: 6px; white-space: nowrap; }
.credit a, .fact a { color: #1b73c4; }

.detail { height: 120px; }
.tabs-detail { height: 24px; padding: 6px 8px 0 3px; }
.tabs-detail .tab-on { margin-right: 2px; }
.tabs-detail .tab { height: 18px; }
.close { margin: 0 0 6px auto; font: 700 8px/9px "Open Sans", sans-serif; }
.facts { display: flex; gap: 8px; padding: 6px 5px; }
.fact { width: 144px; height: 79px; }
.fact th { width: 60px; text-align: left; white-space: nowrap; }
.fact svg { display: inline-block; width: 9px; height: 9px; margin: 0 2px 0 4px; vertical-align: middle; }
.fact td { padding-right: 2px; text-align: right; white-space: nowrap; }
.fact tr:nth-child(odd) { background: #f5f5f5; }
.fact-even tr:nth-child(odd) { background: none; }
.fact-even tr:nth-child(even) { background: #f5f5f5; }
```
FILE: app.js
```js
const trackers = [
  ["Balise 1", "2020-11-16 17:58:07", 0, "green", "car"],
  ["Balise 10", "2020-11-15 23:12:12", 0, "green", "truck"],
  ["Balise 11", "2020-11-16 18:29:28", 37, "green", "truck"],
  ["Balise 12", "2020-11-16 18:25:06", 0, "green", "truck"],
  ["Balise 13", "2020-11-16 17:31:57", 0, "green", "truck"],
  ["Balise 14", "Pas de donnée", 0, "none", "truck"],
  ["Balise 15", "Pas de donnée", 0, "none", "truck"],
  ["Balise 16", "2020-11-13 22:22:07", 0, "none", "truck"],
  ["Balise 17", "2020-11-16 18:14:15", 0, "green", "truck"],
  ["Balise 18", "Pas de donnée", 0, "amber", "truck"],
  ["Balise 19", "Pas de donnée", 0, "none", "truck"],
  ["Balise 2", "2020-11-13 01:05:05", 0, "none", "red"],
  ["Balise 3", "2020-11-13 01:47:33", 0, "none", "truck"],
  ["Balise 4", "2020-11-13 00:43:40", 0, "none", "bus"]
];

document.getElementById("rows").insertAdjacentHTML("beforeend", trackers.map(([name, seen, speed, signal, vehicle], i) => `
  <tr class="row${i === 0 || i === 2 ? " row-on" : ""}">
    <td><input type="checkbox" checked aria-label="Afficher ${name}"></td>
    <td><input type="checkbox" checked aria-label="Suivre ${name}"></td>
    <td><svg><use href="#v-${vehicle}"/></svg></td>
    <td class="name"><span>${name}</span><small>${seen}</small></td>
    <td class="speed">${speed} km/h</td>
    <td class="wifi ${signal}"><svg><use href="#i-wifi"/></svg></td>
    <td class="menu"><svg><use href="#i-dots"/></svg></td>
  </tr>`).join(""));
```
